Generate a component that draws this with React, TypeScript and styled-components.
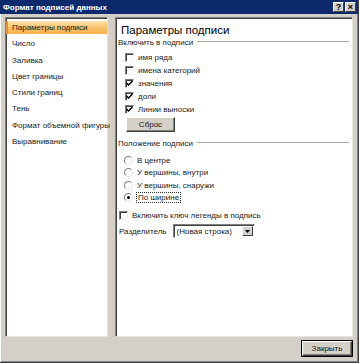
import React, { useState } from "react";
import styled, { createGlobalStyle } from "styled-components";

const GlobalStyle = createGlobalStyle`
  html, body { margin: 0; padding: 0; background: #d4d0c8; }
  body { font-family: "Liberation Sans", Arial, sans-serif; }
`;

const Window = styled.div`
  width: 359px;
  height: 363px;
  box-sizing: border-box;
  background: #d4d0c8;
  border-right: 1px solid #404040;
  border-bottom: 1px solid #404040;
  box-shadow: inset 1px 0 #fff, inset -1px -1px #808080;
  display: flex;
  flex-direction: column;
  font-size: 8px;
  color: #1a1a1a;
`;

const TitleBar = styled.div`
  height: 14px;
  flex: none;
  background: #0c2a6c;
  display: flex;
  align-items: center;
  justify-content: space-between;
  padding: 0 2px 0 3px;
`;

const Title = styled.span`
  color: #fff;
  font-weight: bold;
  font-size: 8px;
`;

const TitleButtons = styled.div`
  display: flex;
  gap: 1px;
`;

const TitleButton = styled.div`
  width: 11px;
  height: 10px;
  box-sizing: border-box;
  background: #d4d0c8;
  border: 1px solid;
  border-color: #fff #404040 #404040 #fff;
  display: flex;
  align-items: center;
  justify-content: center;
  font-size: 9px;
  font-weight: bold;
  line-height: 1;
  color: #000;
`;

const Body = styled.div`
  flex: 1;
  display: flex;
  gap: 7px;
  padding: 3px 5px 0 5px;
`;

const Panel = styled.div<{ $width?: number }>`
  ${(p) => (p.$width ? `width: ${p.$width}px; flex: none;` : "flex: 1;")}
  box-sizing: border-box;
  background: #fff;
  border: 1px solid;
  border-color: #808080 #e8e6e0 #e8e6e0 #808080;
  box-shadow: inset 1px 1px #404040;
`;

const NavList = styled.ul`
  list-style: none;
  margin: 0;
  padding: 3px 0 0 0;
  display: flex;
  flex-direction: column;
  gap: 3.3px;
`;

const NavItem = styled.li<{ $active?: boolean }>`
  height: 13px;
  box-sizing: border-box;
  padding-left: 6px;
  display: flex;
  align-items: center;
  white-space: nowrap;
  ${(p) =>
    p.$active &&
    `
    background: linear-gradient(#fde3b0, #f9bf66 55%, #f7b150);
    border-left: 2px solid #e8902c;
    padding-left: 4px;
  `}
`;

const Content = styled.div`
  padding: 6px 3px 0 2px;
  display: flex;
  flex-direction: column;
`;

const Heading = styled.div`
  font-size: 11.5px;
  line-height: 13px;
  margin-left: 3px;
  color: #000;
`;

const SectionLabel = styled.div<{ $top: number }>`
  display: flex;
  align-items: center;
  height: 10px;
  margin-top: ${(p) => p.$top}px;
  white-space: nowrap;
  &::after {
    content: "";
    flex: 1;
    margin-left: 4px;
    height: 0;
    border-top: 1px solid #a8a8a8;
    border-bottom: 1px solid #fff;
  }
`;

const OptionList = styled.div<{ $top: number; $indent: number }>`
  display: flex;
  flex-direction: column;
  margin-top: ${(p) => p.$top}px;
  padding-left: ${(p) => p.$indent}px;
`;

const OptionRow = styled.label<{ $h: number }>`
  height: ${(p) => p.$h}px;
  display: flex;
  align-items: center;
  gap: 4px;
  white-space: nowrap;
`;

const Box = styled.span`
  width: 9px;
  height: 9px;
  box-sizing: border-box;
  flex: none;
  background: #fff;
  border: 1px solid;
  border-color: #808080 #f4f4f4 #f4f4f4 #808080;
  box-shadow: inset 1px 1px #404040;
  display: flex;
  align-items: center;
  justify-content: center;
`;

const Radio = styled.span`
  width: 9px;
  height: 9px;
  box-sizing: border-box;
  flex: none;
  border-radius: 50%;
  background: #fff;
  border: 1px solid;
  border-color: #808080 #e8e8e8 #e8e8e8 #808080;
  display: flex;
  align-items: center;
  justify-content: center;
`;

const Dot = styled.span`
  width: 3px;
  height: 3px;
  border-radius: 50%;
  background: #000;
`;

const Focus = styled.span`
  outline: 1px dotted #333;
  padding: 0 1px;
`;

const Button = styled.button<{ $default?: boolean; $w: number }>`
  width: ${(p) => p.$w}px;
  height: 15px;
  box-sizing: border-box;
  padding: 0;
  font-family: inherit;
  font-size: 8px;
  color: #111;
  background: #d4d0c8;
  border: 1px solid;
  border-color: #fff #404040 #404040 #fff;
  box-shadow: inset -1px -1px #808080;
  ${(p) =>
    p.$default &&
    `
    outline: 1px solid #000;
    outline-offset: 0;
  `}
`;

const ResetButton = styled(Button)`
  margin: 1px 0 0 8px;
  align-self: flex-start;
`;

const SeparatorRow = styled.div`
  display: flex;
  align-items: center;
  gap: 6px;
  margin: 2px 0 0 1px;
  height: 14px;
`;

const Select = styled.div`
  width: 82px;
  height: 14px;
  box-sizing: border-box;
  background: #fff;
  border: 1px solid;
  border-color: #808080 #fff #fff #808080;
  box-shadow: inset 1px 1px #404040;
  display: flex;
  align-items: center;
  padding-left: 3px;
`;

const SelectText = styled.span`
  flex: 1;
`;

const SelectArrow = styled.span`
  width: 11px;
  height: 10px;
  margin-right: 1px;
  box-sizing: border-box;
  background: #d4d0c8;
  border: 1px solid;
  border-color: #fff #404040 #404040 #fff;
  display: flex;
  align-items: center;
  justify-content: center;
`;

const Footer = styled.div`
  height: 25px;
  flex: none;
  display: flex;
  justify-content: flex-end;
  align-items: flex-start;
  padding: 4px 6px 0 0;
  box-sizing: border-box;
`;

const Check = () => (
  <svg width="7" height="7" viewBox="0 0 7 7">
    <path d="M0.5 3 L2.5 5 L6.5 1" stroke="#000" strokeWidth="1.5" fill="none" />
  </svg>
);

const navItems = [
  "Параметры подписи",
  "Число",
  "Заливка",
  "Цвет границы",
  "Стили границ",
  "Тень",
  "Формат объемной фигуры",
  "Выравнивание",
];

const checks = [
  { label: "имя ряда", on: false },
  { label: "имена категорий", on: false },
  { label: "значения", on: true },
  { label: "доли", on: true },
  { label: "Линии выноски", on: true },
];

const positions = ["В центре", "У вершины, внутри", "У вершины, снаружи", "По ширине"];

export default function App() {
  const [active] = useState(0);
  const selectedPos = 3;

  return (
    <>
      <GlobalStyle />
      <Window>
        <TitleBar>
          <Title>Формат подписей данных</Title>
          <TitleButtons>
            <TitleButton>?</TitleButton>
            <TitleButton>×</TitleButton>
          </TitleButtons>
        </TitleBar>
        <Body>
          <Panel $width={103}>
            <NavList>
              {navItems.map((item, i) => (
                <NavItem key={item} $active={i === active}>
                  {item}
                </NavItem>
              ))}
            </NavList>
          </Panel>
          <Panel>
            <Content>
              <Heading>Параметры подписи</Heading>
              <SectionLabel $top={0}>Включить в подписи</SectionLabel>
              <OptionList $top={4} $indent={7}>
                {checks.map((c) => (
                  <OptionRow key={c.label} $h={13}>
                    <Box>{c.on && <Check />}</Box>
                    {c.label}
                  </OptionRow>
                ))}
              </OptionList>
              <ResetButton $w={49}>Сброс</ResetButton>
              <SectionLabel $top={6}>Положение подписи</SectionLabel>
              <OptionList $top={6} $indent={6}>
                {positions.map((p, i) => (
                  <OptionRow key={p} $h={12.5}>
                    <Radio>{i === selectedPos && <Dot />}</Radio>
                    {i === selectedPos ? <Focus>{p}</Focus> : p}
                  </OptionRow>
                ))}
              </OptionList>
              <OptionList $top={5} $indent={1}>
                <OptionRow $h={13}>
                  <Box />
                  Включить ключ легенды в подпись
                </OptionRow>
              </OptionList>
              <SeparatorRow>
                <span>Разделитель</span>
                <Select>
                  <SelectText>(Новая строка)</SelectText>
                  <SelectArrow>
                    <svg width="5" height="3" viewBox="0 0 5 3">
                      <path d="M0 0 H5 L2.5 3 Z" fill="#000" />
                    </svg>
                  </SelectArrow>
                </Select>
              </SeparatorRow>
            </Content>
          </Panel>
        </Body>
        <Footer>
          <Button $default $w={50}>
            Закрыть
          </Button>
        </Footer>
      </Window>
    </>
  );
}
